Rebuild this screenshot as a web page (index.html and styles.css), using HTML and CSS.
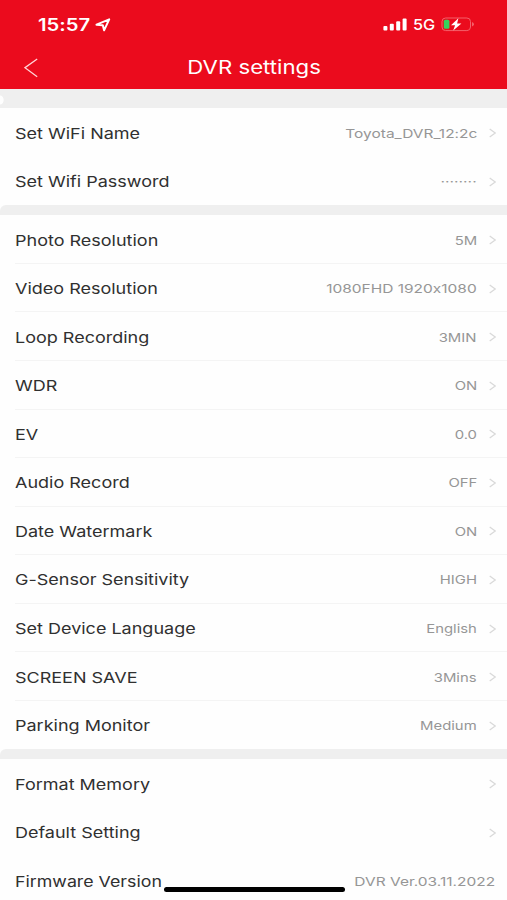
FILE: index.html
```html
<!DOCTYPE html>
<html lang="en">
<head>
<meta charset="utf-8">
<title>DVR settings</title>
<link rel="stylesheet" href="styles.css">
</head>
<body>
<svg class="defs" aria-hidden="true"><symbol id="chev" viewBox="0 0 7 10"><path d="M.7 1 6.2 5 .7 9" fill="none" stroke="currentColor" stroke-width="1.2"/></symbol></svg>
<header class="header">
  <div class="status">
    <span class="time">15:57</span>
    <svg class="location" viewBox="0 0 16 14"><path d="M1.5 6.7 14.2 1.3 9.1 12.3 7.8 7.3Z" fill="none" stroke="#fff" stroke-width="2" stroke-linejoin="round"/></svg>
    <svg class="signal" viewBox="0 0 25 13" fill="#fff"><rect x=".4" y="8" width="4" height="4.4" rx="1"/><rect x="6.8" y="5.8" width="4" height="6.6" rx="1"/><rect x="13.2" y="3.3" width="4" height="9.1" rx="1"/><rect x="19.6" y=".5" width="4" height="11.9" rx="1"/></svg>
    <span class="network">5G</span>
    <svg class="battery" viewBox="0 0 34 15"><rect x="1" y="1" width="28.5" height="12.6" rx="3.6" fill="none" stroke="#f4606b" stroke-width="1"/><path d="M31 5v4.6q2-.8 2-2.3T31 5Z" fill="#f4606b"/><rect x="2.8" y="2.8" width="5.6" height="9" rx="1.5" fill="#35d15b"/><path d="M17.4 1.2 10 8.3h4.1L12.2 13.6 20.4 6.4h-4.3Z" fill="#fff"/></svg>
  </div>
  <div class="nav">
    <svg class="back" viewBox="0 0 14 20"><path d="M13.2 1 1 9.7 13.2 18.7" fill="none" stroke="#ffd5d7" stroke-width="1.3"/></svg>
    <h1 class="title">DVR settings</h1>
  </div>
</header>
<main class="settings">
  <div class="gap first"></div>
  <section class="group plain">
    <div class="row"><span class="label">Set WiFi Name</span><span class="value wide">Toyota_DVR_12:2c</span><svg class="chev"><use href="#chev"/></svg></div>
    <div class="row"><span class="label">Set Wifi Password</span><span class="value dots">········</span><svg class="chev"><use href="#chev"/></svg></div>
  </section>
  <div class="gap"></div>
  <section class="group">
    <div class="row"><span class="label">Photo Resolution</span><span class="value">5M</span><svg class="chev"><use href="#chev"/></svg></div>
    <div class="row"><span class="label">Video Resolution</span><span class="value wide">1080FHD 1920x1080</span><svg class="chev"><use href="#chev"/></svg></div>
    <div class="row"><span class="label">Loop Recording</span><span class="value">3MIN</span><svg class="chev"><use href="#chev"/></svg></div>
    <div class="row"><span class="label">WDR</span><span class="value">ON</span><svg class="chev"><use href="#chev"/></svg></div>
    <div class="row"><span class="label">EV</span><span class="value">0.0</span><svg class="chev"><use href="#chev"/></svg></div>
    <div class="row"><span class="label">Audio Record</span><span class="value">OFF</span><svg class="chev"><use href="#chev"/></svg></div>
    <div class="row"><span class="label">Date Watermark</span><span class="value">ON</span><svg class="chev"><use href="#chev"/></svg></div>
    <div class="row"><span class="label">G-Sensor Sensitivity</span><span class="value">HIGH</span><svg class="chev"><use href="#chev"/></svg></div>
    <div class="row"><span class="label">Set Device Language</span><span class="value">English</span><svg class="chev"><use href="#chev"/></svg></div>
    <div class="row"><span class="label">SCREEN SAVE</span><span class="value">3Mins</span><svg class="chev"><use href="#chev"/></svg></div>
    <div class="row"><span class="label">Parking Monitor</span><span class="value">Medium</span><svg class="chev"><use href="#chev"/></svg></div>
  </section>
  <div class="gap"></div>
  <section class="group plain">
    <div class="row"><span class="label">Format Memory</span><svg class="chev"><use href="#chev"/></svg></div>
    <div class="row"><span class="label">Default Setting</span><svg class="chev"><use href="#chev"/></svg></div>
    <div class="row firmware"><span class="label">Firmware Version</span><span class="value wide">DVR Ver.03.11.2022</span></div>
  </section>
</main>
<div class="home-indicator"></div>
</body>
</html>
```

FILE: styles.css
```css
* { box-sizing: border-box; }
body {
  margin: 0;
  width: 507px;
  height: 900px;
  overflow: hidden;
  position: relative;
  background: #fefefe;
  font-family: Inter, "Liberation Sans", sans-serif;
  font-feature-settings: "calt" 0;
  color: #303030;
}
.defs { position: absolute; width: 0; height: 0; }
.header { height: 89.4px; background: #eb0b1d; color: #fff; }
.status {
  height: 49px;
  padding: 0 32px 0 37.5px;
  display: flex;
  align-items: center;
}
.time {
  width: 57px;
  font-size: 17px;
  font-weight: 600;
  transform: scaleX(1.19);
  transform-origin: left;
}
.location { width: 16px; height: 14px; }
.signal { width: 25px; height: 13px; margin-left: auto; }
.network {
  width: 28px;
  margin-left: 5px;
  font-size: 14.5px;
  font-weight: 500;
  transform: scaleX(1.12);
  transform-origin: left;
}
.battery { width: 34px; height: 15px; }
.nav {
  height: 37px;
  padding: 0 24px;
  display: grid;
  grid-template-columns: 14px 1fr 14px;
  align-items: center;
}
.back { width: 14px; height: 20px; }
.title {
  margin: 0;
  padding-left: 1px;
  height: 24px;
  line-height: 22px;
  text-align: center;
  font-size: 18.5px;
  font-weight: 400;
  transform: scaleX(1.2);
}
.gap { height: 9.9px; background: #efefef; border-top-left-radius: 6px; }
.gap.first { height: 19px; border-radius: 0; background: radial-gradient(ellipse 4px 5px at 0 11px, #fefefe 80%, #efefef); }
.row {
  height: 48.55px;
  padding: 1px 11.5px 0 15px;
  display: flex;
  align-items: center;
  background: linear-gradient(#f4f4f4, #f4f4f4) 15px 100% / 100% 1px no-repeat;
}
.plain .row, .row:last-child { background: none; }
.label {
  font-size: 15px;
  transform: scaleX(1.2);
  transform-origin: left;
  white-space: nowrap;
}
.firmware .label { transform: scaleX(1.185); }
.value {
  margin-left: auto;
  font-size: 12px;
  color: #969696;
  transform: scaleX(1.24);
  transform-origin: right;
  white-space: nowrap;
}
.value.wide { transform: scaleX(1.29); }
.value.dots { transform: scaleX(1.31); }
.chev { width: 7px; height: 10px; margin-left: 11.5px; color: #d9d9d9; flex: none; }
.label + .chev { margin-left: auto; }
.home-indicator {
  position: absolute;
  left: 164px;
  top: 887px;
  width: 181px;
  height: 5px;
  border-radius: 3px;
  background: #000;
}
```
